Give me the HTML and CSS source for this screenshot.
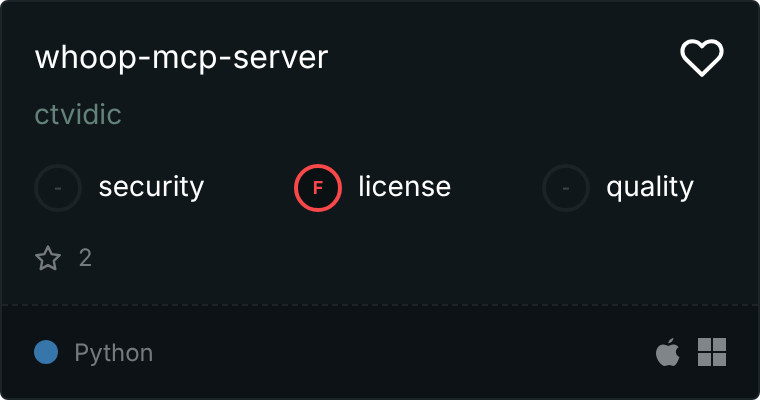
FILE: index.html
```html
<!DOCTYPE html>
<html lang="en">
<head>
<meta charset="utf-8">
<title>whoop-mcp-server</title>
<link rel="stylesheet" href="styles.css">
</head>
<body>
<article class="card">
  <div class="main">
    <header class="head">
      <div class="title">whoop-mcp-server</div>
      <svg class="heart" viewBox="0 0 24 24" width="48" height="48" aria-hidden="true"><path d="M12 20.400 4 12.600C2.900 11.500 2.200 10 2.200 8.600 2.200 5.700 4.500 3.600 7.200 3.600c1.900 0 3.600.9 4.800 2.600 1.200-1.700 2.900-2.600 4.800-2.600 2.700 0 5 2.100 5 5 0 1.400-.7 2.900-1.800 4L12 20.400Z"/></svg>
    </header>
    <div class="author">ctvidic</div>
    <div class="scores">
      <div class="score"><span class="badge">-</span><span class="label">security</span></div>
      <div class="score"><span class="badge fail">F</span><span class="label">license</span></div>
      <div class="score"><span class="badge">-</span><span class="label">quality</span></div>
    </div>
    <div class="stars">
      <svg class="star" viewBox="0 0 28 28" width="28" height="28" aria-hidden="true"><path d="M14 2.500l3.600 7.600 8.100 1.100-5.900 5.700 1.500 8.200-7.300-4-7.300 4 1.500-8.200-5.900-5.700 8.100-1.100z"/></svg>
      <span class="muted">2</span>
    </div>
  </div>
  <footer class="foot">
    <div class="lang"><span class="dot"></span><span class="muted">Python</span></div>
    <div class="os">
      <svg viewBox="0 0 24 28" width="24" height="28" aria-hidden="true"><path d="M17.400 0c.2 2.300-2.300 5-5 5.200C12.200 3 14.700.5 17.400 0ZM12.300 7.900c1 0 2.900-1.400 5.100-1.300 1.300 0 3.600.5 5.200 2.700-4 2.500-3.400 8 .9 9.800-1.100 3.400-3.600 8.900-6 8.900-1.500 0-2.400-1-4.200-1s-3 1-4.400 1C5 28 0 21 0 15.800 0 9.700 3.800 6.600 7.300 6.600c2 0 4 1.300 5 1.300Z"/></svg>
      <svg viewBox="0 0 28 28" width="28" height="28" aria-hidden="true"><path d="M0 0h13v13H0zM15 0h13v13H15zM0 15h13v13H0zM15 15h13v13H15z"/></svg>
    </div>
  </footer>
</article>
</body>
</html>
```
FILE: styles.css
```css
* { box-sizing: border-box; }
html, body { margin: 0; padding: 0; background: #fff; }
body { width: 760px; height: 400px; font-family: Inter, "Liberation Sans", sans-serif; text-rendering: geometricPrecision; }
.card {
  width: 760px; height: 400px; display: flex; flex-direction: column;
  background: #0f171a; border: 2px solid #1c2427; border-radius: 8px; overflow: hidden;
}
.main { flex: 1; padding: 30px 32px 0; }
.head { display: flex; justify-content: space-between; align-items: flex-start; }
.title { font-size: 32px; line-height: 50px; color: #fff; height: 50px; will-change: transform; }
.heart { fill: none; stroke: #fff; stroke-width: 2; stroke-linejoin: round; margin: 2px 0 0; }
.author { font-size: 28px; line-height: 32px; color: #638279; margin-top: 16px; will-change: transform; }
.scores { display: flex; justify-content: space-between; padding-right: 32px; margin-top: 34px; }
.score { display: flex; align-items: center; gap: 16px; }
.badge {
  width: 48px; height: 48px; border-radius: 50%; border: 4px solid #1c2326;
  color: #3c4346; font-size: 18px; font-weight: 700; will-change: transform;
  display: flex; align-items: center; justify-content: center;
}
.fail { border-color: #f8484a; color: #f8484a; background: #0b1013; }
.label { font-size: 28px; color: #fff; padding-bottom: 4px; will-change: transform; }
.stars { display: flex; align-items: center; gap: 16px; margin-top: 31px; color: #747a7d; font-size: 24px; line-height: 30px; }
.star { fill: none; stroke: #747a7d; stroke-width: 2.400; stroke-linejoin: round; }
.muted { will-change: transform; }
.foot {
  height: 94px; flex: none; display: flex; justify-content: space-between; align-items: center;
  padding: 0 32px; background: #0c1215; border-top: 2px dashed #1c2427;
}
.lang { display: flex; align-items: center; gap: 16px; font-size: 24px; color: #747a7d; }
.dot { width: 24px; height: 24px; border-radius: 50%; background: #3776ab; }
.os { display: flex; align-items: center; gap: 18px; }
.os svg { fill: #7f8588; }
```
